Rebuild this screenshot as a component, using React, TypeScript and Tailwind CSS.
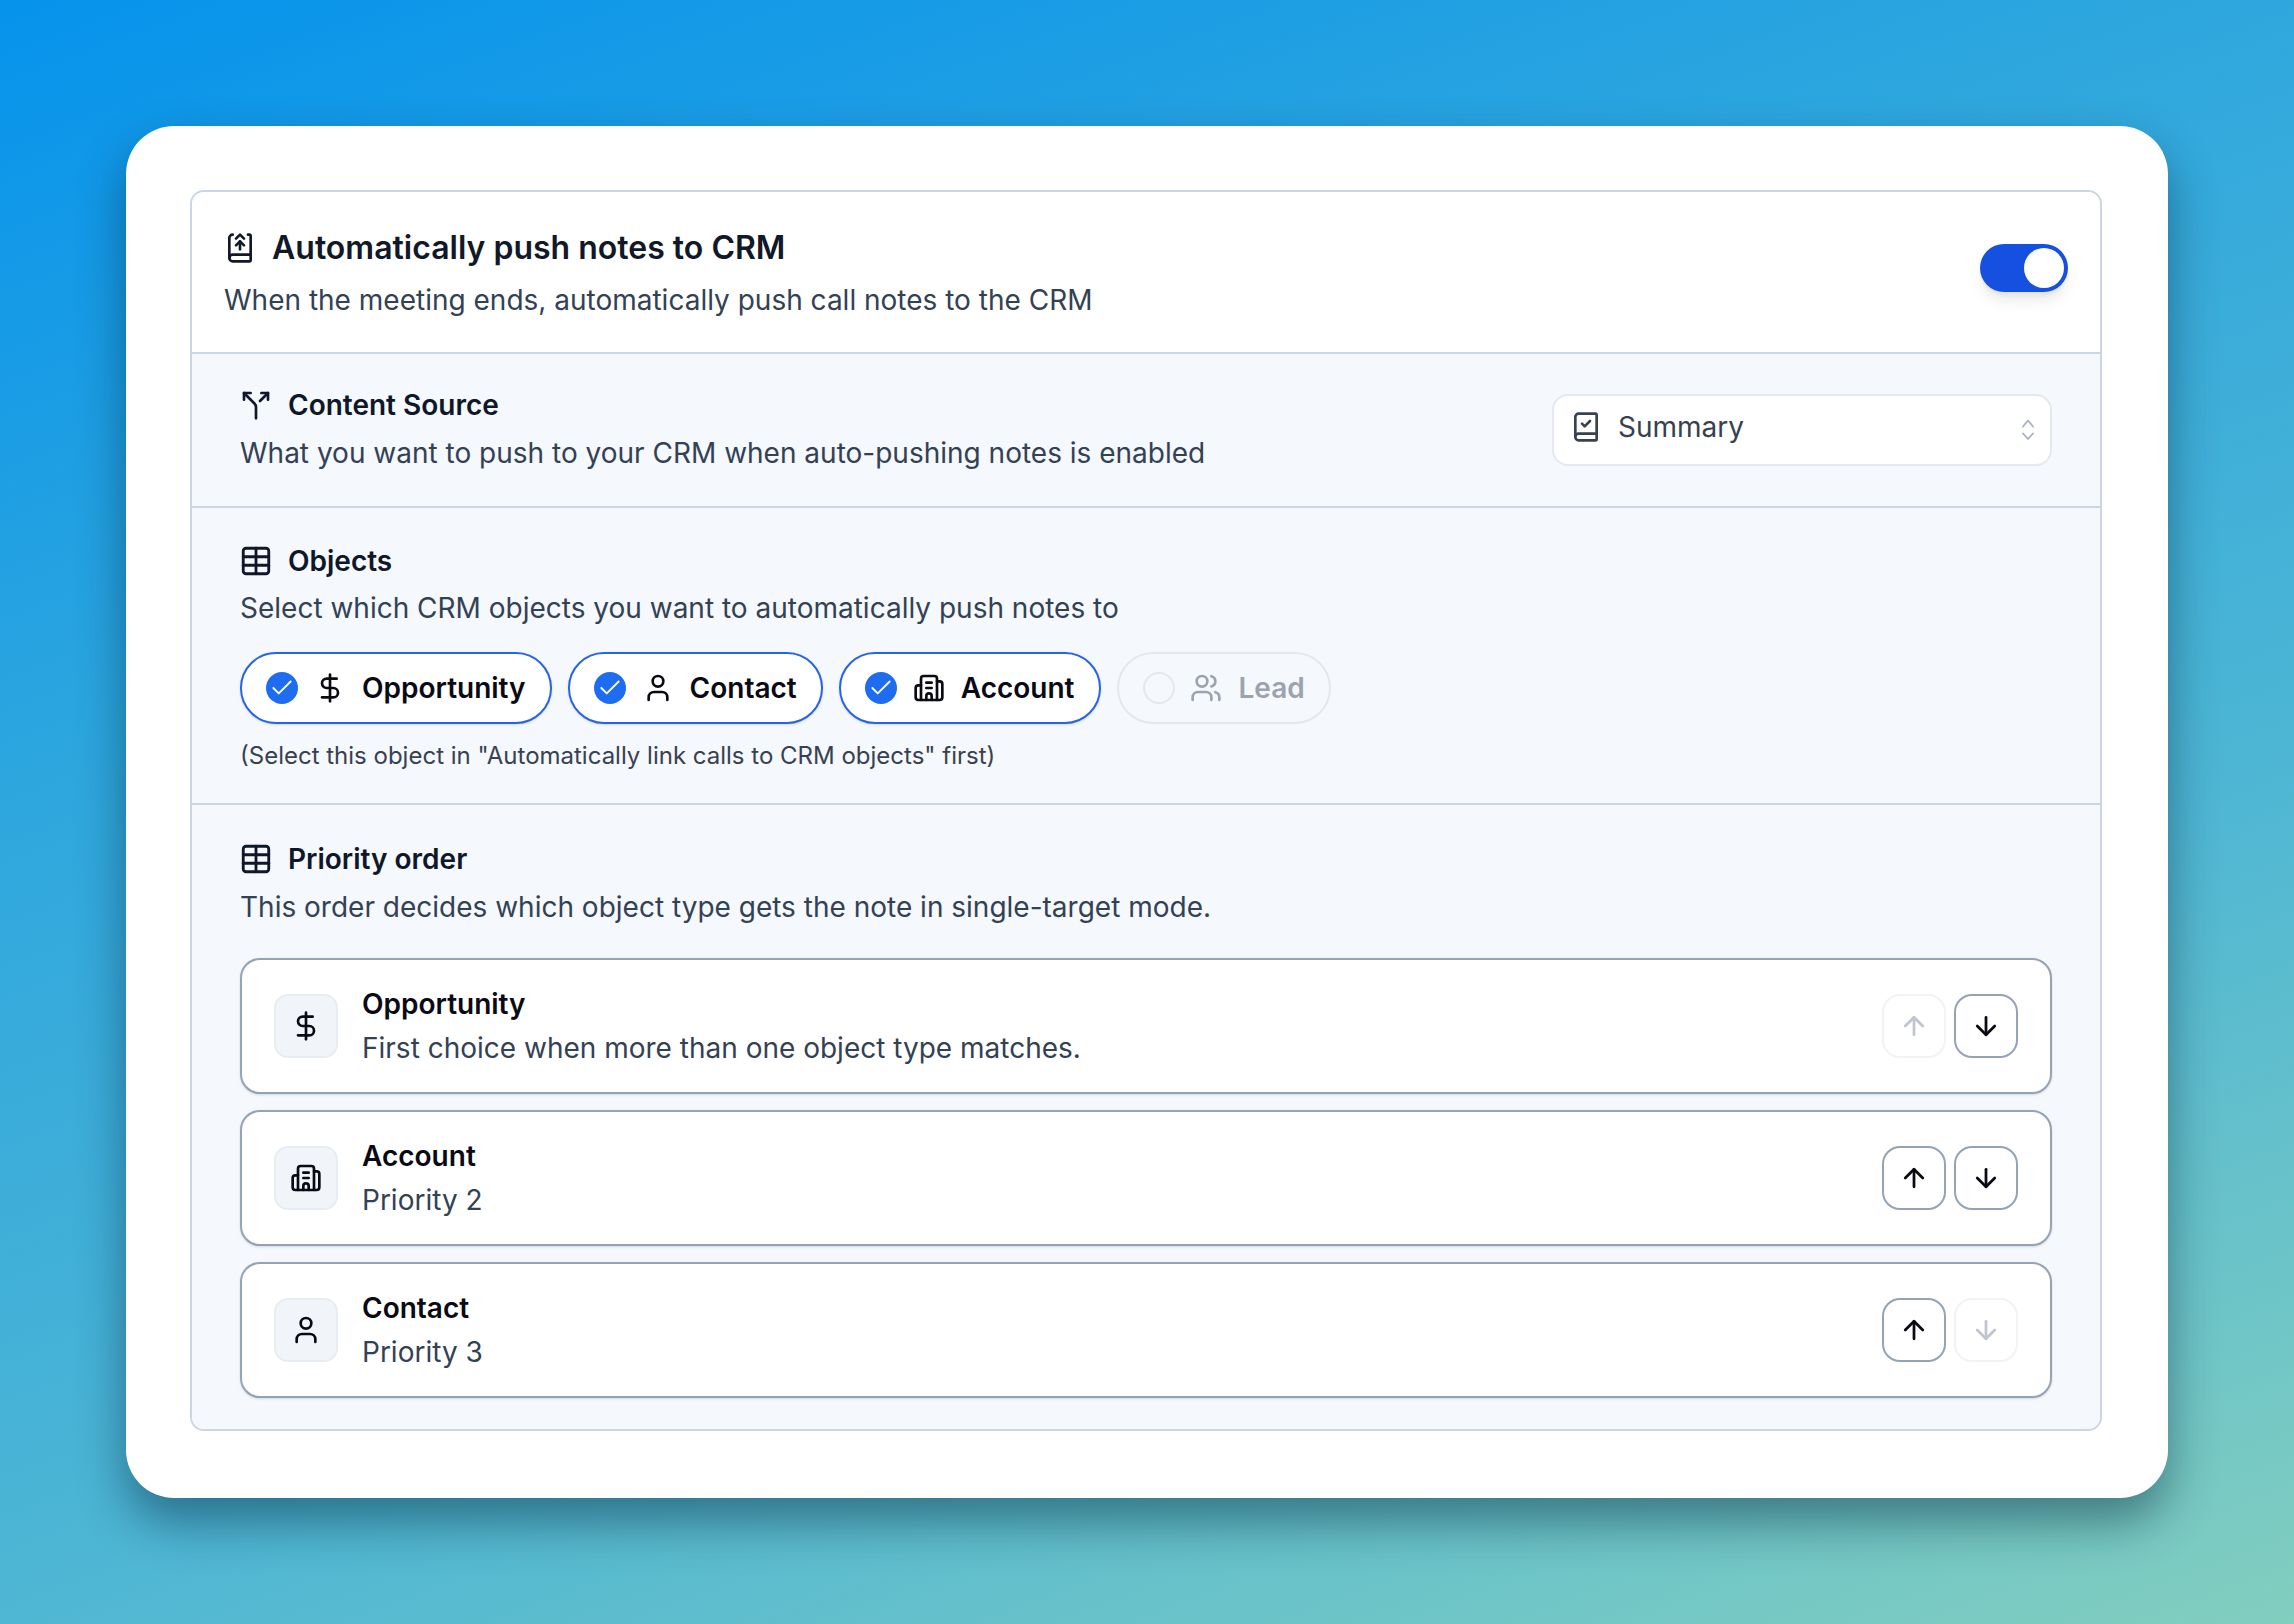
import React from "react";
import { ArrowDown, ArrowUp, BookCheck, BookUp2, Building2, Check, DollarSign, Split, Table, User, Users } from "lucide-react";

function Updown({ className }: { className?: string }) {
  return (
    <svg viewBox="0 0 14 24" fill="none" stroke="currentColor" strokeWidth="1.8" strokeLinecap="round" strokeLinejoin="round" className={className}>
      <path d="m2 8.5 5-6 5 6" />
      <path d="m2 15.5 5 5.5 5-5.5" />
    </svg>
  );
}

function SectionHead({ icon, title }: { icon: React.ReactNode; title: string }) {
  return (
    <div className="flex items-center gap-[16px] h-[40px] text-[#0f172a]">
      {icon}
      <span className="text-[28px] font-semibold">{title}</span>
    </div>
  );
}

function Pill({ icon, label, on, wide }: { icon: React.ReactNode; label: string; on: boolean; wide?: boolean }) {
  return (
    <div
      className={
        (on
          ? "flex items-center h-[72px] pl-[24px] rounded-full border-2 border-[#2563eb] bg-white text-[#0a0a14] shadow-sm"
          : "flex items-center h-[72px] pl-[24px] rounded-full border-2 border-[#e5e7eb] text-[#9ca3af]") +
        (wide ? " pr-[25px]" : " pr-[24px]")
      }
    >
      {on ? (
        <span className="flex items-center justify-center w-[32px] h-[32px] rounded-full bg-[#1e6df0] text-white">
          <Check className="w-[26px] h-[26px]" strokeWidth={1.7} />
        </span>
      ) : (
        <span className="w-[32px] h-[32px] rounded-full border-2 border-[#e5e7eb]" />
      )}
      <span className={on ? "flex ml-[16px] mr-[16px]" : "flex ml-[15px] mr-[16px]"}>{icon}</span>
      <span className="text-[28px] font-semibold">{label}</span>
    </div>
  );
}

function MoveBtn({ up, off }: { up: boolean; off: boolean }) {
  const cls = "w-[30px] h-[30px]";
  return (
    <span
      className={
        off
          ? "flex items-center justify-center w-[64px] h-[64px] rounded-[18px] border-2 border-[#f1f3f6] text-[#c0c5d0]"
          : "flex items-center justify-center w-[64px] h-[64px] rounded-[18px] border-2 border-[#94a3b8] text-[#0a0a14]"
      }
    >
      {up ? <ArrowUp className={cls} strokeWidth={2.2} /> : <ArrowDown className={cls} strokeWidth={2.2} />}
    </span>
  );
}

function Row({ icon, title, sub, upOff, downOff }: { icon: React.ReactNode; title: string; sub: string; upOff?: boolean; downOff?: boolean }) {
  return (
    <div className="flex items-center h-[136px] px-[32px] rounded-[20px] border-2 border-[#94a3b8] bg-white shadow-sm">
      <span className="flex items-center justify-center w-[64px] h-[64px] rounded-[14px] border-2 border-[#e8ecf3] bg-[#f1f5f9] text-[#0a0a14]">
        {icon}
      </span>
      <div className="ml-[24px] flex-1">
        <div className="text-[28px] leading-[44px] font-semibold text-[#0a0a14]">{title}</div>
        <div className="text-[28px] leading-[44px] text-[#334155]">{sub}</div>
      </div>
      <div className="flex gap-[8px]">
        <MoveBtn up off={!!upOff} />
        <MoveBtn up={false} off={!!downOff} />
      </div>
    </div>
  );
}

export default function App() {
  const sm = "w-[32px] h-[32px]";
  const tbl = "w-[34px] h-[34px] -mx-[1px]";
  return (
    <div
      className="w-[2294px] h-[1624px] pt-[126px] pl-[126px] bg-[linear-gradient(160deg,#0693ec_0%,#2ba5df_30%,#4eb6d4_65%,#82cebf_100%)] overflow-hidden"
      style={{ fontFamily: "Inter, 'Noto Sans', sans-serif" }}
    >
      <div className="w-[2042px] h-[1372px] p-[64px] rounded-[48px] bg-white shadow-[0_24px_48px_rgba(0,30,50,0.45)]">
        <div className="w-[1912px] h-[1241px] rounded-[14px] border-2 border-[#ccd5e3] overflow-hidden">
          <div className="flex items-center justify-between h-[160px] pl-[32px] pr-[32px] bg-white">
            <div>
              <div className="flex items-center gap-[16px] h-[50px] text-[#111827]">
                <BookUp2 className="w-[32px] h-[32px]" strokeWidth={2} />
                <span className="text-[32px] font-semibold">Automatically push notes to CRM</span>
              </div>
              <div className="mt-[5px] text-[28px] leading-[44px] text-[#334155]">When the meeting ends, automatically push call notes to the CRM</div>
            </div>
            <div className="flex items-center justify-end w-[88px] h-[48px] mb-[8px] pr-[4px] rounded-full bg-[#1650e0] shadow-lg">
              <span className="w-[40px] h-[40px] rounded-full bg-white" />
            </div>
          </div>

          <div className="flex items-center justify-between h-[154px] pl-[48px] pr-[48px] border-t-2 border-[#ccd5e3] bg-[#f5f8fc]">
            <div>
              <SectionHead icon={<Split className="w-[32px] h-[32px]" strokeWidth={2} />} title="Content Source" />
              <div className="mt-[6px] text-[28px] leading-[44px] text-[#334155]">What you want to push to your CRM when auto-pushing notes is enabled</div>
            </div>
            <div className="flex items-center w-[500px] h-[72px] pl-[16px] pr-[14px] rounded-[16px] border-2 border-[#e5e8ef] bg-white text-[#374151]">
              <BookCheck className="w-[32px] h-[32px] mb-[7px]" strokeWidth={2} />
              <span className="ml-[16px] flex-1 text-[28px] mb-[6px]">Summary</span>
              <Updown className="w-[16px] h-[24px] text-[#a8b0bc]" />
            </div>
          </div>

          <div className="h-[297px] pt-[33px] pl-[48px] pr-[48px] border-t-2 border-[#ccd5e3] bg-[#f5f8fc]">
            <SectionHead icon={<Table className={tbl} strokeWidth={2} />} title="Objects" />
            <div className="mt-[5px] text-[28px] leading-[44px] text-[#334155]">Select which CRM objects you want to automatically push notes to</div>
            <div className="flex gap-[16px] mt-[22px]">
              <Pill on label="Opportunity" icon={<DollarSign className={sm} strokeWidth={2} />} />
              <Pill on label="Contact" icon={<User className={sm} strokeWidth={2} />} />
              <Pill on wide label="Account" icon={<Building2 className={sm} strokeWidth={2} />} />
              <Pill on={false} label="Lead" icon={<Users className={sm} strokeWidth={2} />} />
            </div>
            <div className="mt-[16px] text-[24px] leading-[32px] text-[#374151]">(Select this object in "Automatically link calls to CRM objects" first)</div>
          </div>

          <div className="h-[626px] pt-[34px] pl-[48px] pr-[48px] border-t-2 border-[#ccd5e3] bg-[#f5f8fc]">
            <SectionHead icon={<Table className={tbl} strokeWidth={2} />} title="Priority order" />
            <div className="mt-[6px] text-[28px] leading-[44px] text-[#334155]">This order decides which object type gets the note in single-target mode.</div>
            <div className="flex flex-col gap-[16px] mt-[29px]">
              <Row icon={<DollarSign className={sm} strokeWidth={2} />} title="Opportunity" sub="First choice when more than one object type matches." upOff />
              <Row icon={<Building2 className={sm} strokeWidth={2} />} title="Account" sub="Priority 2" />
              <Row icon={<User className={sm} strokeWidth={2} />} title="Contact" sub="Priority 3" downOff />
            </div>
          </div>
        </div>
      </div>
    </div>
  );
}
